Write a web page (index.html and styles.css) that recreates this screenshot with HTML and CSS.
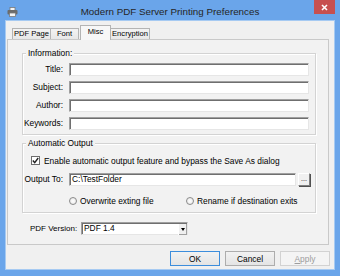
FILE: index.html
```html
<!DOCTYPE html>
<html lang="en">

<head>
    <meta charset="UTF-8">
    <title>Modern PDF Server Printing Preferences</title>
    <link rel="stylesheet" href="styles.css">
</head>

<body>
    <div class="window">
        <div class="titlebar">
            <svg class="app-icon" width="11" height="10" viewBox="0 0 11 10">
                <rect x="3" y="0.5" width="5" height="3" fill="#f4f4f4" stroke="#7a7a7a" stroke-width="0.8"/>
                <rect x="0.5" y="3" width="10" height="4.5" rx="1" fill="#6b6b6b"/>
                <rect x="2.5" y="6" width="6" height="3.5" fill="#f4f4f4" stroke="#7a7a7a" stroke-width="0.8"/>
            </svg>
            <div class="title">Modern PDF Server Printing Preferences</div>
            <div class="close">
                <svg width="7" height="7" viewBox="0 0 7 7">
                    <path d="M1 1L6 6M6 1L1 6" stroke="#fff" stroke-width="1.6"/>
                </svg>
            </div>
        </div>

        <div class="client">
            <div class="tabs">
                <div class="tab tab-pdf">PDF Page</div>
                <div class="tab tab-font">Font</div>
                <div class="tab tab-misc active">Misc</div>
                <div class="tab tab-enc">Encryption</div>
            </div>

            <div class="panel">
                <!-- Information -->
                <div class="group info">
                    <span class="legend">Information:</span>
                    <div class="fields">
                        <label>Title:</label><div class="input"></div>
                        <label>Subject:</label><div class="input"></div>
                        <label>Author:</label><div class="input"></div>
                        <label>Keywords:</label><div class="input"></div>
                    </div>
                </div>

                <!-- Automatic Output -->
                <div class="group auto">
                    <span class="legend">Automatic Output</span>
                    <div class="check-row">
                        <span class="checkbox">
                            <svg width="7" height="7" viewBox="0 0 7 7">
                                <path d="M0.8 3.6L2.7 5.6L6.2 1" fill="none" stroke="#222" stroke-width="1.4"/>
                            </svg>
                        </span>
                        Enable automatic output feature and bypass the Save As dialog
                    </div>
                    <div class="output-row">
                        <label>Output To:</label>
                        <div class="input">C:\TestFolder</div>
                        <div class="browse">...</div>
                    </div>
                    <div class="radio-row">
                        <div class="option first"><span class="radio"></span>Overwrite exting file</div>
                        <div class="option"><span class="radio"></span>Rename if destination exits</div>
                    </div>
                </div>

                <div class="version-row">
                    <label>PDF Version:</label>
                    <div class="select">
                        <span class="value">PDF 1.4</span>
                        <span class="arrow"></span>
                    </div>
                </div>
            </div>

            <div class="buttons">
                <button class="btn default">OK</button>
                <button class="btn">Cancel</button>
                <button class="btn disabled"><u>A</u>pply</button>
            </div>
        </div>
    </div>
</body>
</html>
```

FILE: styles.css
```css
* {
    margin: 0;
    padding: 0;
    box-sizing: border-box;
}

body {
    font-family: "Liberation Sans", Arial, sans-serif;
    font-size: 8.4px;
    color: #000;
    background-color: #6aa5ea;
}

.window {
    width: 340px;
    height: 276px;
    background-color: #6aa5ea; /* Win8 frame blue */
    display: flex;
    flex-direction: column;
}

/* Title bar */
.titlebar {
    height: 21px;
    display: grid;
    grid-template-columns: 1fr auto 1fr;
}

.app-icon {
    margin: 7px 0 0 7px;
}

.title {
    font-size: 9.8px;
    line-height: 21px;
    padding-top: 1px;
    color: #262626;
}

.close {
    justify-self: end;
    width: 21px;
    height: 14px;
    margin-right: 5px;
    background-color: #c75050;
    display: flex;
    align-items: center;
    justify-content: center;
}

/* Client area */
.client {
    flex: 1;
    margin: 0 6px 7px;
    background-color: #f0f0f0;
    box-shadow: 0 0 0 1px #a6caf2;
    display: flex;
    flex-direction: column;
    padding: 4px 4px 0 1px;
}

.tabs {
    height: 14px;
    display: flex;
    align-items: flex-end;
    padding-left: 5px;
    position: relative;
    z-index: 1;
}

.tab {
    height: 11px;
    border: 1px solid #b4b4b4;
    border-bottom: none;
    background: linear-gradient(#f3f3f3, #e7e7e7);
    line-height: 10px;
    text-align: center;
    font-size: 7.6px;
    white-space: nowrap;
}

.tab-pdf { width: 39px; }
.tab-font { width: 28px; border-left: none; }
.tab-enc { width: 39px; border-left: none; }

.tab.active {
    width: 31px;
    height: 15px;
    margin-bottom: -1px;
    margin-left: 1px;
    border-left: 1px solid #b4b4b4;
    background: #f7f7f7;
    line-height: 12px;
}

.panel {
    width: 322px;
    height: 206px;
    border: 1px solid #c9c9c9;
    background-color: #f2f2f2;
    padding: 13px 12px 0 14px;
}

/* Group boxes */
.group {
    border: 1px solid #d3d3d3;
    box-shadow: inset 1px 1px 0 #fff, 1px 1px 0 #fff;
}

.legend {
    display: block;
    width: max-content;
    margin: -6px 0 0 3px;
    padding: 0 2px;
    line-height: 11px;
    background-color: #f2f2f2;
}

.info {
    padding: 0 6px 4px 0;
}

.fields {
    margin-top: 4px;
    display: grid;
    grid-template-columns: 40px 1fr;
    column-gap: 6px;
    row-gap: 5px;
}

label {
    text-align: right;
    line-height: 13px;
    white-space: nowrap;
}

.input {
    height: 13px;
    background-color: #fff;
    border: 1px solid;
    border-color: #a0a0a0 #e6e6e6 #e6e6e6 #a0a0a0;
    box-shadow: inset 1px 1px 0 #6f6f6f;
    line-height: 11px;
    padding-left: 2px;
}

.auto {
    margin-top: 8px;
    padding: 0 5px 6px 0;
}

.check-row {
    margin-top: 6px;
    padding-left: 8px;
    height: 11px;
    display: flex;
    align-items: center;
    gap: 4px;
    white-space: nowrap;
}

.checkbox {
    width: 9px;
    height: 9px;
    border: 1px solid #6d6d6d;
    background-color: #fff;
    display: flex;
    align-items: center;
    justify-content: center;
}

.output-row {
    margin-top: 7px;
    display: flex;
}

.output-row label {
    width: 40px;
    margin-right: 6px;
}

.output-row .input {
    flex: 1;
}

.browse {
    width: 12px;
    height: 13px;
    margin-left: 2px;
    border: 1px solid;
    border-color: #fff #808080 #808080 #fff;
    box-shadow: 1px 1px 0 #505050;
    background-color: #f0f0f0;
    text-align: center;
    line-height: 9px;
    font-size: 7px;
}

.radio-row {
    margin-top: 9px;
    height: 11px;
    padding-left: 46px;
    display: flex;
    white-space: nowrap;
}

.option {
    display: flex;
    align-items: center;
    gap: 3px;
}

.option.first {
    width: 117px;
}

.radio {
    width: 8px;
    height: 8px;
    border-radius: 50%;
    border: 1px solid #8a8a8a;
    background: radial-gradient(#ffffff, #e4e4e4);
}

.version-row {
    margin-top: 9px;
    display: flex;
    padding-left: 8px;
}

.version-row label {
    width: 51px;
    text-align: left;
    font-size: 8px;
}

.select {
    width: 107px;
    height: 13px;
    display: flex;
    background-color: #fff;
    border: 1px solid;
    border-color: #a0a0a0 #e6e6e6 #e6e6e6 #a0a0a0;
    box-shadow: inset 1px 1px 0 #6f6f6f;
}

.select .value {
    flex: 1;
    line-height: 11px;
    padding-left: 2px;
}

.select .arrow {
    width: 9px;
    height: 11px;
    margin-top: 1px;
    background-color: #f0f0f0;
    border-left: 1px solid #fff;
    box-shadow: inset -1px -1px 0 #a0a0a0;
    display: flex;
    align-items: center;
    justify-content: center;
}

.select .arrow::after {
    content: "";
    border-left: 2.5px solid transparent;
    border-right: 2.5px solid transparent;
    border-top: 3px solid #000;
}

/* Dialog buttons */
.buttons {
    margin-top: 6px;
    display: flex;
    justify-content: flex-end;
    gap: 5px;
}

.btn {
    width: 50px;
    height: 15px;
    font-family: inherit;
    font-size: 8.4px;
    color: #000;
    border: 1px solid #adadad;
    background: linear-gradient(#f2f2f2, #e4e4e4);
}

.btn.default {
    border-color: #3c8ddc;
}

.btn.disabled {
    color: #9d9d9d;
    border-color: #d2d2d2;
    background: #f4f4f4;
}
```
